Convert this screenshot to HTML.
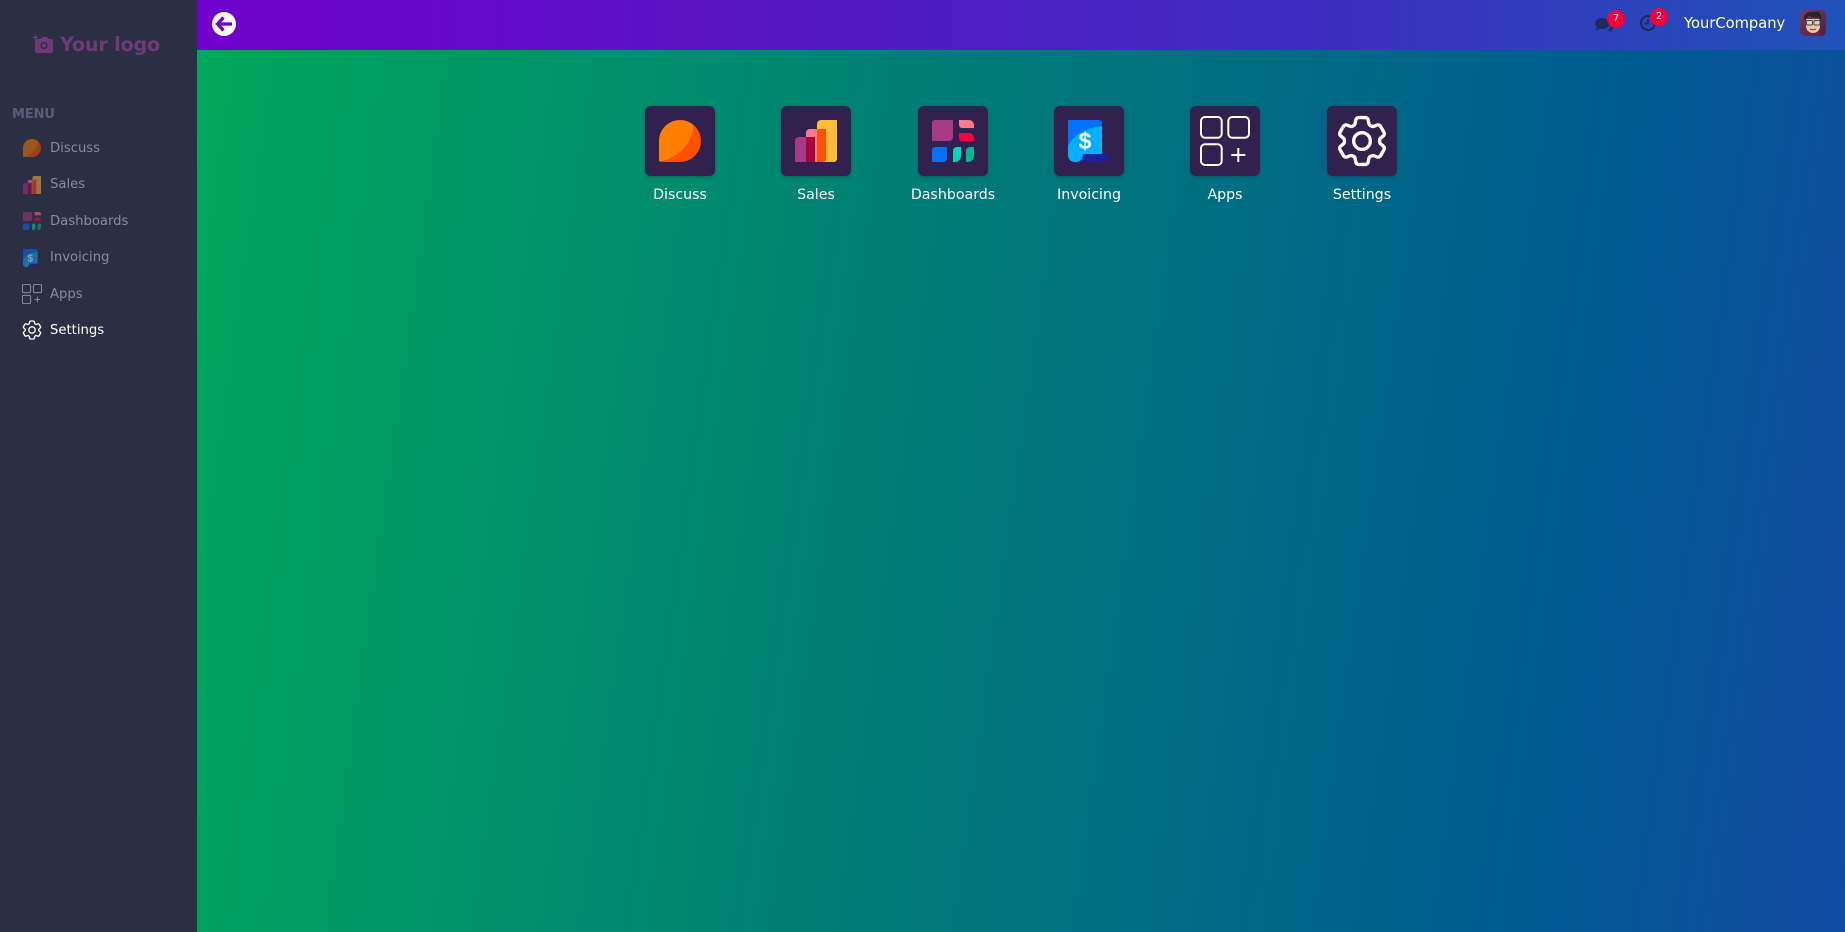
<!DOCTYPE html>
<html lang="en"><head><meta charset="utf-8"><title>Home</title>
<style>
*{box-sizing:border-box}
html,body{margin:0;padding:0;width:1845px;height:932px;overflow:hidden;font-family:"DejaVu Sans","Liberation Sans",sans-serif}
body{position:relative;background:#2c2e43}
.side{position:absolute;left:0;top:0;width:197px;height:932px;background:#2c2e43}
.main{position:absolute;left:197px;top:0;width:1648px;height:932px;background:linear-gradient(98deg,#00a85b 0%,#007b78 45%,#005a92 82%,#134aa2 100%)}
.top{position:absolute;left:197px;top:0;width:1648px;height:50px;background:linear-gradient(90deg,#7000cc 0%,#5a12c4 30%,#3c2fc0 70%,#1f52b8 100%)}
.logo{position:absolute;left:60px;top:33px;line-height:24px;font-size:19.2px;font-weight:700;color:#6e3a78;white-space:nowrap;letter-spacing:-.2px}
.menu{position:absolute;left:12px;top:106px;line-height:18px;font-size:13px;font-weight:700;color:#5b5e7a;letter-spacing:-.1px}
.it{position:absolute;left:50px;line-height:18px;font-size:13.2px;color:#8a8b98;white-space:nowrap}
.it.on{color:#fff}
.ic{position:absolute;opacity:.52}
.tile{position:absolute;top:106px;width:70px;height:70px;background:#32204f;border-radius:6px;box-shadow:0 1px 3px rgba(0,0,0,.22)}
.tile svg{position:absolute;left:14px;top:14px;width:42px;height:42px}
.lab{position:absolute;top:185px;width:120px;text-align:center;line-height:20px;font-size:14.200px;color:#fff;white-space:nowrap}
.badge{position:absolute;width:18px;height:18px;border-radius:50%;background:#f5003c;color:#fff;font-size:10px;line-height:18px;text-align:center}
.co{position:absolute;left:1684px;top:14px;line-height:20px;font-size:14.700px;color:#fff;white-space:nowrap}
</style></head><body>
<svg width="0" height="0" style="position:absolute">
<defs>
<symbol id="d" viewBox="0 0 42 42"><path d="M0 21A21 21 0 1 1 21 42H3a3 3 0 0 1-3-3Z" fill="#ff5000"/><path d="M0 21A21 21 0 0 1 34.500 5C33 24 20 38 0 41.500Z" fill="#ff7f00"/></symbol>
<symbol id="s" viewBox="0 0 42 42"><path d="M26 0H42V39a3 3 0 0 1-3 3H22V4a4 4 0 0 1 4-4Z" fill="#ffbb33"/><path d="M15 9H31V39a3 3 0 0 1-3 3H11V13a4 4 0 0 1 4-4Z" fill="#ff7a90"/><path d="M22 9H31V39a3 3 0 0 1-3 3H22Z" fill="#ff5000"/><path d="M4 17H20V42H0V21a4 4 0 0 1 4-4Z" fill="#a63a84"/><path d="M11 17H20V42H11Z" fill="#a80040"/></symbol>
<symbol id="b" viewBox="0 0 42 42"><path d="M3 0H21V17a4 4 0 0 1-4 4H0V3a3 3 0 0 1 3-3Z" fill="#a63a84"/><path d="M27 0H37a5 5 0 0 1 5 5V8H30a3 3 0 0 1-3-3Z" fill="#ff7a8a"/><path d="M27 13H37a5 5 0 0 1 5 5V21H30a3 3 0 0 1-3-3Z" fill="#ff0040"/><path d="M3 27H15V38a4 4 0 0 1-4 4H0V30a3 3 0 0 1 3-3Z" fill="#0070ff"/><path d="M25 27H29V36a6 6 0 0 1-6 6H21V31a4 4 0 0 1 4-4Z" fill="#00d8bb"/><path d="M38 27H42V36a6 6 0 0 1-6 6H34V31a4 4 0 0 1 4-4Z" fill="#00b890"/></symbol>
<symbol id="v" viewBox="0 0 42 42"><path d="M13 34H42C41 39 38 42 34 42H8Z" fill="#20209a"/><path d="M0 0H31a3 3 0 0 1 3 3V34H15C15 39 12 42 7 42C3 42 0 39 0 35Z" fill="#0070ff"/><path d="M0 26C5 15 18 8 34 6V34H15C15 39 12 42 7 42C3 42 0 39 0 35Z" fill="#00b0ff"/><text x="17" y="29" text-anchor="middle" font-family="Liberation Sans,sans-serif" font-size="23" font-weight="700" fill="#fff">$</text></symbol>
<symbol id="a" viewBox="0 0 50 50" overflow="visible"><g fill="none" stroke="#fff" stroke-width="2"><rect x="1" y="1" width="20.700" height="20.700" rx="4"/><rect x="28.300" y="1" width="20.700" height="20.700" rx="4"/><rect x="1" y="28.300" width="20.700" height="20.700" rx="4"/><path d="M38.300 32v14M31.300 39h14"/></g></symbol>
<symbol id="g" viewBox="2 2 20 20" preserveAspectRatio="none"><g fill="none" stroke="#fff" stroke-width="1.300" stroke-linejoin="round"><path d="M9.594 3.940c.09-.542.56-.94 1.110-.94h2.593c.55 0 1.020.398 1.110.94l.213 1.281c.063.374.313.686.645.870.074.04.147.083.22.127.325.196.72.257 1.075.124l1.217-.456a1.125 1.125 0 0 1 1.370.49l1.296 2.247a1.125 1.125 0 0 1-.26 1.431l-1.003.827c-.293.241-.438.613-.43.992a7.723 7.723 0 0 1 0 .255c-.008.378.137.75.43.991l1.004.827c.424.35.534.955.26 1.430l-1.298 2.247a1.125 1.125 0 0 1-1.369.491l-1.217-.456c-.355-.133-.75-.072-1.076.124a6.470 6.470 0 0 1-.22.128c-.331.183-.581.495-.644.869l-.213 1.281c-.09.543-.56.94-1.110.94h-2.594c-.55 0-1.019-.398-1.110-.94l-.213-1.281c-.062-.374-.312-.686-.644-.87a6.520 6.520 0 0 1-.22-.127c-.325-.196-.72-.257-1.076-.124l-1.217.456a1.125 1.125 0 0 1-1.369-.49l-1.297-2.247a1.125 1.125 0 0 1 .26-1.431l1.004-.827c.292-.24.437-.613.43-.991a6.932 6.932 0 0 1 0-.255c.007-.38-.138-.751-.43-.992l-1.004-.827a1.125 1.125 0 0 1-.26-1.430l1.297-2.247a1.125 1.125 0 0 1 1.370-.491l1.216.456c.356.133.751.072 1.076-.124.072-.044.146-.086.22-.128.332-.183.582-.495.644-.869l.214-1.280Z"/><circle cx="12" cy="12" r="3.200"/></g></symbol>
</defs></svg>

<div class="main"></div>
<div class="top"></div>

<div class="side">
<svg style="position:absolute;left:33px;top:35px" width="20" height="18" viewBox="0 0 20 18"><path d="M4 4H7.500L9 2H14L15.500 4H18a2 2 0 0 1 2 2V16a2 2 0 0 1-2 2H4a2 2 0 0 1-2-2V6a2 2 0 0 1 2-2Z" fill="#6e3a78"/><circle cx="11" cy="10.500" r="3.600" fill="#2c2e43"/><circle cx="11" cy="10.500" r="2.200" fill="#6e3a78"/><path d="M2.500 0v5M0 2.500h5" stroke="#6e3a78" stroke-width="1.200"/></svg>
<div class="logo">Your logo</div>
<div class="menu">MENU</div>

<svg class="ic" style="left:23px;top:139px" width="18" height="18"><use href="#d"/></svg>
<div class="it" style="top:140px">Discuss</div>
<svg class="ic" style="left:23px;top:176px" width="18" height="18"><use href="#s"/></svg>
<div class="it" style="top:176px">Sales</div>
<svg class="ic" style="left:23px;top:212px" width="18" height="18"><use href="#b"/></svg>
<div class="it" style="top:213px">Dashboards</div>
<svg class="ic" style="left:23px;top:249px" width="18" height="18"><use href="#v"/></svg>
<div class="it" style="top:249px">Invoicing</div>
<svg class="ic" style="left:22px;top:284px;opacity:.55;overflow:visible" width="20" height="20"><use href="#a"/></svg>
<div class="it" style="top:286px">Apps</div>
<svg style="position:absolute;left:22px;top:320px" width="20" height="20"><use href="#g"/></svg>
<div class="it on" style="top:322px">Settings</div>
</div>

<svg style="position:absolute;left:212px;top:12px" width="24" height="24" viewBox="0 0 24 24"><circle cx="12" cy="12" r="12" fill="#fff"/><path d="M11.500 5.500L5.500 12l6 6.500M6.500 12H20" fill="none" stroke="#7000cc" stroke-width="3.200"/></svg>

<svg style="position:absolute;left:1595px;top:15px" width="20" height="19" viewBox="0 0 20 19"><path d="M7.500 3C3.400 3 0 5.300 0 8.500c0 1.500.8 2.900 2 3.900-.1 1-.7 1.900-1.300 2.600 1.500-.1 3-.6 4.100-1.400.9.200 1.800.3 2.700.3 4.100 0 7.500-2.400 7.500-5.400S11.600 3 7.500 3Z" fill="#1c2a5e"/><path d="M16 9c1.500 1 2 2.200 2 3.300 0 1-.6 1.900-1.300 2.500 0 .7.400 1.300.9 1.800-1.200-.1-2.300-.4-3.100-1-.7.200-1.500.2-2.300.1 1.800-1 3.500-3.200 3.800-6.700Z" fill="#1c2a5e"/></svg>
<div class="badge" style="left:1607px;top:10px">7</div>
<svg style="position:absolute;left:1639px;top:14px" width="18" height="18" viewBox="0 0 18 18"><circle cx="9" cy="9" r="7" fill="none" stroke="#1c2a5e" stroke-width="2.200"/><path d="M9 5v4.500H5.500" fill="none" stroke="#1c2a5e" stroke-width="1.800"/></svg>
<div class="badge" style="left:1650px;top:8px">2</div>
<div class="co">YourCompany</div>
<svg style="position:absolute;left:1800px;top:10px" width="26" height="26" viewBox="0 0 26 26"><defs><linearGradient id="av" x1="0" y1="0" x2="1" y2="1"><stop offset="0" stop-color="#7a3a5c"/><stop offset="1" stop-color="#4f1c48"/></linearGradient><clipPath id="avc"><rect width="26" height="26" rx="5"/></clipPath></defs><g clip-path="url(#avc)"><rect width="26" height="26" fill="url(#av)"/><path d="M5 26c1-4 4-5 8-5s7 1 8 5Z" fill="#5d2b50"/><path d="M6 9h14v7c0 4-3 7-7 7s-7-3-7-7Z" fill="#f0c5a8"/><path d="M4 9C3 4 9 1 14 2c3-1 6 0 6 2 2 1 2 5 0 7l-1-4c-4 1-8 0-10-1-1 1-3 2-3 5Z" fill="#2a2226"/><rect x="6.500" y="10.500" width="6" height="4.500" rx="1" fill="#cfd6d0" stroke="#44453f"/><rect x="14" y="10.500" width="6" height="4.500" rx="1" fill="#cfd6d0" stroke="#44453f"/><path d="M10 19c2 1 4 1 6 0" stroke="#8a4a3a" fill="none"/></g></svg>

<div class="tile" style="left:645px"><svg><use href="#d"/></svg></div><div class="lab" style="left:620px">Discuss</div>
<div class="tile" style="left:781px"><svg><use href="#s"/></svg></div><div class="lab" style="left:756px">Sales</div>
<div class="tile" style="left:918px"><svg><use href="#b"/></svg></div><div class="lab" style="left:893px">Dashboards</div>
<div class="tile" style="left:1054px"><svg><use href="#v"/></svg></div><div class="lab" style="left:1029px">Invoicing</div>
<div class="tile" style="left:1190px"><svg style="left:10px;top:10px;width:50px;height:50px"><use href="#a"/></svg></div><div class="lab" style="left:1165px">Apps</div>
<div class="tile" style="left:1327px"><svg style="left:9px;top:9px;width:52px;height:52px"><use href="#g"/></svg></div><div class="lab" style="left:1302px">Settings</div>
</body></html>
